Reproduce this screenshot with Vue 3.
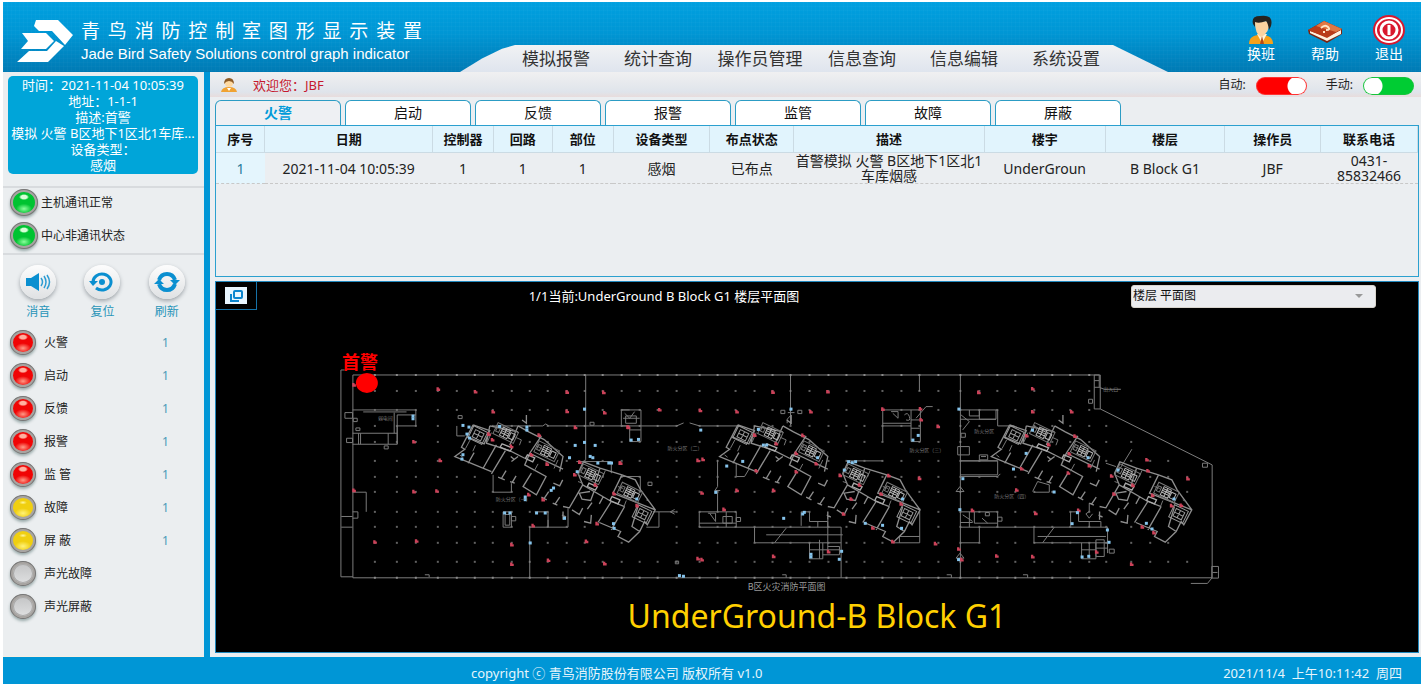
<script setup>
import { ref } from 'vue'

const navItems = ['模拟报警', '统计查询', '操作员管理', '信息查询', '信息编辑', '系统设置']
const tabs = ['火警', '启动', '反馈', '报警', '监管', '故障', '屏蔽']
const activeTab = ref(0)
const autoMode = ref(true)
const manualMode = ref(false)
const floorView = ref('楼层 平面图')

const counters = [
  { name: '火警', color: 'red', count: 1 },
  { name: '启动', color: 'red', count: 1 },
  { name: '反馈', color: 'red', count: 1 },
  { name: '报警', color: 'red', count: 1 },
  { name: '监 管', color: 'red', count: 1 },
  { name: '故障', color: 'yellow', count: 1 },
  { name: '屏 蔽', color: 'yellow', count: 1 },
  { name: '声光故障', color: 'grey' },
  { name: '声光屏蔽', color: 'grey' }
]

const columns = [
  ['序号', 49], ['日期', 168], ['控制器', 61], ['回路', 59], ['部位', 61], ['设备类型', 97],
  ['布点状态', 84], ['描述', 191], ['楼宇', 121], ['楼层', 120], ['操作员', 96], ['联系电话', 97]
]
const records = [
  ['1', '2021-11-04 10:05:39', '1', '1', '1', '感烟', '已布点', '首警模拟 火警 B区地下1区北1车库烟感', 'UnderGroun', 'B Block G1', 'JBF', '0431-85832466']
]

/* column grid of the garage, in plan units */
const gridX = [375, 397, 416, 438, 457, 475, 493, 512, 530, 548, 567, 585, 603, 622, 640, 658, 677, 700, 718, 736, 755, 773, 791, 810, 829, 847, 865, 883, 902, 920, 939, 961, 980, 998, 1016, 1035, 1053, 1071, 1090, 1107, 1132, 1151, 1169, 1188]
const gridY = [391, 410, 426, 442, 461, 477, 492, 512, 527, 543, 562]
const towers = [{ x: 345 }, { x: 610 }, { x: 882 }]
const towerLeft = [457, 722, 994]
const inTower = (x, y) =>
  towerLeft.some((l) => x > l - 2 && x < l + 204 && y > 416 + 0.45 * (x - l) && y < 464 + 0.45 * (x - l))
const outside = (x, y) => x > 1094 && y < 416 + (x - 1094) * 0.48
const dots = gridX.flatMap((x) => gridY.map((y) => [x, y])).filter(([x, y]) => !inTower(x, y) && !outside(x, y))
const wallTicks = gridX.filter((x) => x < 1100)

/* detectors: each sheet lists positions at three times plan scale */
const sheets = [
  {
    x: 330,
    red: '72,135 325,148 437,156 490,216 712,157 712,215 822,158 825,219 737,263 252,306 331,362 72,452 252,456 321,454 135,607 260,604 546,615 546,674 656,662 770,605 825,672 750,367 872,370 477,283 488,300 628,286 545,320 605,345 652,373 735,405 797,436 853,462 597,465 640,480 802,552 610,558 895,262',
    blue: '250,229 250,237 765,208 400,257 418,262 412,283 420,295 510,260 592,262 592,271 765,308 797,317 737,317 720,354 782,350 790,354 805,370 838,370 743,396 400,345 397,358 665,452 672,445 587,472 587,480 525,520 541,520 621,520 647,520 705,536 602,610 852,552 854,566'
  },
  {
    x: 610,
    red: '490,157 655,156 820,208 150,210 272,212 382,216 604,216 933,207 56,263 435,286 580,287 500,312 560,341 620,372 440,393 560,396 32,370 265,362 280,359 692,407 838,408 277,460 382,452 492,452 930,416 815,463 725,478 875,493 82,498 343,509 702,523 790,565 850,606 657,636 265,657 277,660 492,650 935,240 750,436',
    blue: '545,208 274,271 65,301 87,299 447,269 462,316 472,316 400,365 352,379 625,354 705,391 718,366 729,369 739,366 6,370 319,458 880,478 82,478 523,536 580,523 585,518 768,551 820,557 877,566 605,644 605,652 697,635 690,659 911,301 927,287 222,710 210,708'
  },
  {
    x: 920,
    red: '178,158 340,147 340,216 457,216 56,260 322,288 467,289 388,315 450,342 510,378 307,387 447,400 683,360 686,393 806,417 577,409 641,437 292,451 584,463 700,467 786,497 757,498 159,512 349,521 478,512 669,562 704,579 48,612 118,628 232,649 340,651 532,637 637,674 127,660',
    blue: '119,208 340,271 321,341 283,388 507,354 405,457 597,391 765,478 131,417 122,510 475,519 459,552 682,551 699,568 565,571 570,608 509,650 489,652 118,660'
  }
]
const marks = (list) => list.split(' ').map((p) => p.split(',').map(Number))

const stairs = [[482, 281], [605, 336], [738, 405], [855, 460]]
const rooms = [[400, 286], [893, 523]]
</script>

<template>
  <div class="page">
    <header class="header">
      <svg class="logo" viewBox="0 0 56 42" aria-hidden="true">
        <path fill="#fff" d="M19 0H41L56 15L48 25L35 11H22L17 6z" />
        <path fill="#fff" d="M5 13H29L37 21L29 29H4L11 21z" />
        <path fill="#fff" d="M12 31H30L39 21L47 26L31 42H0z" />
      </svg>
      <div class="brand">
        <h1>青鸟消防控制室图形显示装置</h1>
        <p>Jade Bird Safety Solutions control graph indicator</p>
      </div>
      <nav class="nav">
        <a v-for="item in navItems" :key="item" href="#">{{ item }}</a>
      </nav>
      <div class="actions">
        <button type="button">
          <svg viewBox="0 0 30 30" aria-hidden="true">
            <path d="M3 29C3 22 8 20 14 20C22 20 27 22 27 29z" fill="#f6a11a" />
            <path d="M11 19L16 28L21 19z" fill="#fff4dc" /><path d="M16 21L14 29H18z" fill="#b54a17" />
            <path d="M9 7Q9 19 15 22Q24 18 23 6z" fill="#fbd3a0" />
            <path d="M7 9Q5 1 14 1Q28 -1 25 11L23 15Q22 8 20 6Q13 9 9 7L9 12z" fill="#26231f" />
          </svg>换班
        </button>
        <button type="button">
          <svg viewBox="0 0 36 30" aria-hidden="true">
            <path d="M1 15L17 6L35 14V19L20 28L2 19z" fill="#7b2410" />
            <path d="M20 22L34 15V19L20 26L3 18V16z" fill="#fff1df" />
            <path d="M1 15L17 6L35 14L20 23z" fill="#b93c1a" /><path d="M9 11L17 6L35 14L29 17z" fill="#df7844" />
            <path d="M14 13Q18 9 21 12T19 15M16 17H18" fill="none" stroke="#ffe5c7" stroke-width="2" />
          </svg>帮助
        </button>
        <button type="button">
          <svg viewBox="0 0 32 30" aria-hidden="true">
            <ellipse cx="16" cy="15" rx="16" ry="15" fill="#d9182e" /><ellipse cx="16" cy="15" rx="13" ry="12" fill="none" stroke="#fff" stroke-width="2" />
            <ellipse cx="16" cy="15" rx="8" ry="8" fill="none" stroke="#fff" stroke-width="3" />
            <path d="M16 10V20" stroke="#fff" stroke-width="3" />
          </svg>退出
        </button>
      </div>
    </header>

    <div class="body">
      <aside class="sidebar">
        <section class="alert">
          <div>时间：2021-11-04 10:05:39</div>
          <div>地址：1-1-1</div>
          <div>描述:首警</div>
          <div>模拟 火警 B区地下1区北1车库...</div>
          <div>设备类型：</div>
          <div>感烟</div>
        </section>
        <section class="links">
          <div><i class="lamp green"></i>主机通讯正常</div>
          <div><i class="lamp green"></i>中心非通讯状态</div>
        </section>
        <section class="tools">
          <button type="button">
            <span><svg viewBox="0 0 26 20" aria-hidden="true"><path d="M1 6H6L14 1V19L6 14H1z" fill="#0a8fd0" /><path d="M16 6Q19 10 16 14M19 4Q23 10 19 16M22 3Q27 10 22 17" fill="none" stroke="#2d9cd3" stroke-width="1.5" /></svg></span>消音
          </button>
          <button type="button">
            <span><svg viewBox="0 0 26 20" aria-hidden="true"><path d="M4 10A9 8 0 1 1 7 16" fill="none" stroke="#0a8fd0" stroke-width="3" /><path d="M0 9L4 14L9 9z" fill="#0a8fd0" /><circle cx="13" cy="10" r="3" fill="#0a8fd0" /></svg></span>复位
          </button>
          <button type="button">
            <span><svg viewBox="0 0 26 20" aria-hidden="true"><path d="M5 8Q7 2 13 2Q19 2 21 8M21 12Q19 18 13 18Q7 18 5 12" fill="none" stroke="#0a8fd0" stroke-width="4" /><path d="M16 8H26L21 13zM0 12H10L5 7z" fill="#0a8fd0" /></svg></span>刷新
          </button>
        </section>
        <ul class="counters">
          <li v-for="c in counters" :key="c.name"><i class="lamp" :class="c.color"></i><span>{{ c.name }}</span><b v-if="c.count">{{ c.count }}</b></li>
        </ul>
      </aside>

      <main class="main">
        <div class="welcome">
          <svg viewBox="0 0 16 14" aria-hidden="true"><path d="M0 14Q1 9 8 9T16 14z" fill="#f0a232" /><circle cx="8" cy="5" r="4" fill="#ffd9a0" /><path d="M3 6Q3 0 8 0T13 6Q11 3 8 3T3 6z" fill="#8d5a24" /><path d="M6 10L8 13L10 10z" fill="#fff" /></svg>
          <span class="user">欢迎您：JBF</span>
          <label>自动:<input v-model="autoMode" type="checkbox" class="switch" /></label>
          <label>手动:<input v-model="manualMode" type="checkbox" class="switch" /></label>
        </div>

        <div class="tabs" role="tablist">
          <button v-for="(t, i) in tabs" :key="t" type="button" role="tab" :aria-selected="activeTab === i" :class="{ active: activeTab === i }" @click="activeTab = i">{{ t }}</button>
        </div>

        <div class="records">
          <table>
            <colgroup><col v-for="c in columns" :key="c[0]" :style="{ width: (c[1] / 1204) * 100 + '%' }" /></colgroup>
            <thead><tr><th v-for="c in columns" :key="c[0]">{{ c[0] }}</th></tr></thead>
            <tbody><tr v-for="(r, i) in records" :key="i"><td v-for="(v, k) in r" :key="k">{{ v }}</td></tr></tbody>
          </table>
        </div>

        <section class="map">
          <div class="mapbar">
            <button type="button" class="expand" aria-label="展开">
              <svg viewBox="0 0 22 17" aria-hidden="true"><rect width="22" height="17" fill="#e9f6ff" /><rect x="9" y="4" width="8" height="7" rx="1" fill="none" stroke="#0b86cf" stroke-width="2" /><path d="M6 7V14H14" fill="none" stroke="#0b86cf" stroke-width="2" /></svg>
            </button>
            <span class="where">1/1当前:UnderGround B Block G1 楼层平面图</span>
            <label class="floor">
              <select v-model="floorView" aria-label="楼层"><option>楼层 平面图</option></select>
              <svg viewBox="0 0 8 4" aria-hidden="true"><path d="M0 0H8L4 4z" fill="#999" /></svg>
            </label>
          </div>

          <svg class="plan" viewBox="216 345 1203 252" role="img" aria-label="B区火灾消防平面图">
            <g fill="none" stroke="#7c7c7c">
              <path d="M353 375H1101V409L1213 465V578H353zM341 370H345M341 370V577H353M586 375V460M530 527V578M791 375V425M961 375V578M1095 375V409H1101M920 375V391" />
              <path d="M494 426H543L546 424L549 426H677L684 423M690 423L700 426H740M457 426V436H465" />
            </g>
            <g fill="#8a8a8a">
              <rect v-for="(d, i) in dots" :key="i" :x="d[0] - 1" :y="d[1] - 1" width="2" height="2" opacity="0.7" />
              <path v-for="x in wallTicks" :key="x" :d="`M${x - 1} 374h2v2h-2zM${x - 1} 577h2v2h-2z`" />
            </g>

            <g transform="translate(330 340) scale(0.3333)" fill="none" stroke="#7a7a7a" stroke-width="3">
              <path d="M68 210H258V258H202V313H68M68 280H202M193 218V280M202 225V313M202 225H258M100 216H230M92 280V313M86 280V313M175 280V313" />
              <path d="M45 218H68V235H45zM70 235H82V245H70zM50 295H68V308H50zM78 264H90V272H78zM163 318H175V327H163zM385 227H397V236H385zM781 247H793V256H781z" />
              <path d="M68 457H109V516M34 530H68M34 562H68M68 516H84V535H68M490 405V457H545V430M520 516H545V562H520zM526 524H540V556H526zM545 530H558V543H545zM600 562H715V505M615 516H655V562M655 540V562M285 705H298V712" />
              <path d="M740 365H845V400M876 210H900" />
            </g>

            <g transform="translate(610 340) scale(0.3333)" fill="none" stroke="#7a7a7a" stroke-width="3">
              <path d="M35 210H94V305H60V258H35zM45 220L60 235L75 215M40 235H90M60 270H94M48 228H80V250H48zM35 410H92V457M115 427H127V437H115zM130 516H198M182 516L195 509M182 516L195 523M148 516V562H110" />
              <path d="M324 360V440L316 452L324 460V516M316 452L332 452M380 370V410H405L420 385M269 516H380V562M269 516V562H695V714M269 550H380M300 520L318 545V520H295M340 530H368V550H340zM350 516V562M380 533H393V545H380zM435 562V609H695M530 565L495 609M470 585H700" />
              <path d="M575 516V558M600 516V545H655V562M575 516H600M625 545V562M655 540V630M600 609V657H640V609M630 600V657M600 630H690M655 620H690V645H640M820 210V305M820 210H931M820 250H905M820 258H905M850 220L866 235V215H845M905 210V305H933V210M885 225Q895 215 900 230T890 240M905 240H931M905 265H931M514 211H526V221H514zM565 211H577V221H565zM533 250V238L545 225M518 705H530V714M197 664H207V672H197z" />
              <path d="M710 363H820M931 505V609H850M870 609V590H931M535 218H555M920 235L950 200H970" />
            </g>

            <g transform="translate(920 340) scale(0.3333)" fill="none" stroke="#7a7a7a" stroke-width="3">
              <path d="M122 210H235V258H285M150 210V228H180V210M180 210V238H230V210M122 238H230M125 225L150 245L130 270M125 280H138V292H125zM115 320H150V345H115zM122 363H235V405H122M122 410H235L243 402M122 363H235M180 345H205V360H180zM185 350H200" />
              <path d="M110 455L122 440L134 455H110M122 516H235V562M122 562H565V640M122 609H180V562M150 516V562M130 525L160 545M122 548H160M165 516V550H235M198 518H210V528H198zM188 535L205 550M235 532H248V544H235zM344 562V609H565M405 562L370 609M355 590H560" />
              <path d="M454 516V558M478 516V545H545V562M454 516H478M510 545V562M510 490V515L500 522L510 535L520 522M487 609V657H530V609M510 609V657M530 600H555V650H530zM530 625H565M487 630H530M570 628H585V640H570zM344 457H390V435L355 425L340 455M525 105H540V142H525M525 122H540M540 142L555 148H605M508 178H520V190H508zM850 370H865V382H850zM878 680H898V715H878zM880 698H895M878 715L865 731H815M82 705H96V714M311 705H325V714M110 655L122 640L134 655zM600 390L638 328M560 370L590 380" />
            </g>

            <g v-for="t in towers" :key="t.x" :transform="`translate(${t.x} 340) scale(0.3333)`" fill="none" stroke="#8d8d8d" stroke-width="4">
              <path d="M385 255L435 272L418 312L366 290M385 255L350 322L360 328L330 350L440 395M435 258L520 276M435 258L425 310L495 332M388 338L370 370M455 315L415 385M482 332L440 402M520 258L495 315M520 258L552 276L600 300M590 288L555 340L540 375L604 410L575 465L535 440L560 400M490 330L540 355M555 340L655 388M600 300L655 350L645 395" />
              <path d="M532 240L545 250V225M500 365L520 350M508 358L498 350M460 412L480 420M470 416L484 392M496 425L510 430M503 427L514 408M590 472L606 480M598 476L612 455M624 490L638 496M631 493L645 472M626 430L645 438L654 420" />
              <path d="M655 515V540M652 525L664 532M655 500L674 504L714 435L700 400L716 366L766 385L832 405L872 420L888 450L932 510L908 555L900 545L885 575L852 607L820 590L828 575L764 548M766 385L748 440M714 435L800 485L840 500M736 455L704 460L712 478L738 482L748 455M832 405L805 460L932 510M800 485L760 548M840 500L800 570M742 488L728 508M776 470L764 492M682 510L704 524L714 505M718 545L738 550L740 525M860 480L905 500M880 500L862 560L885 575" />
              <path d="M440 278L428 306M512 292L530 300L524 316M580 372L568 394M575 318L592 326M640 360L628 386M700 425L714 430M782 392L774 412M820 440L836 446M845 482L838 500M905 480L916 486M376 300L362 326M392 316L384 334M345 345L354 352" stroke="#777" stroke-width="3" />
              <g v-for="(c, i) in stairs" :key="i" :transform="`translate(${c[0]} ${c[1]}) rotate(26)`" stroke-width="3">
                <rect x="-34" y="-20" width="68" height="36" stroke="#777" />
                <path d="M-14 -15V12H10V-15zM-14 -9H10M-14 -3H10M-14 3H10M-2 -15V12M14 -10H28V8H14z" stroke="#b5b5b5" />
                <path d="M-30 -10H-20V6H-30z" stroke="#777" />
              </g>
              <g v-for="(c, i) in rooms" :key="'r' + i" :transform="`translate(${c[0]} ${c[1]}) rotate(26)`" stroke-width="3">
                <path d="M-24 -20H22V20H-24zM-14 -12H14V12H-14zM-14 0H14M0 -12V12" stroke="#999" />
              </g>
              <path d="M472 312L502 324L496 334L466 322zM548 345L570 354L564 366L542 356zM733 430L758 441L752 451L728 440zM802 470L826 480L820 492L796 482z" stroke="#aaa" />
            </g>

            <g v-for="s in sheets" :key="s.x" :transform="`translate(${s.x} 340) scale(0.3333)`">
              <path v-for="(m, i) in marks(s.red)" :key="i" :d="`M${m[0] - 5} ${m[1] - 6}h7v4h4v7h-11z`" fill="#cc4259" />
              <rect v-for="(m, i) in marks(s.blue)" :key="i" :x="m[0] - 5" :y="m[1] - 5" width="9" height="9" fill="#86c4ec" />
            </g>

            <g class="tiny">
              <text x="496" y="501">防火分区（一）</text><text x="668" y="450">防火分区（二）</text><text x="995" y="498">防火分区（四）</text><text x="910" y="452">防火分区（三）</text>
              <text x="975" y="433">防火分区</text><text x="378" y="420">弱电间</text><text x="1104" y="391">出入口</text>
            </g>
            <text class="sheetname" x="787" y="590">B区火灾消防平面图</text>
            <text class="first" x="360" y="369">首警</text>
            <ellipse cx="367" cy="383" rx="11" ry="10" fill="#f00" />
          </svg>

          <h2>UnderGround-B Block G1</h2>
        </section>
      </main>
    </div>

    <footer class="footer">
      <span>copyright ⓒ 青鸟消防股份有限公司 版权所有 v1.0</span>
      <time>2021/11/4 &nbsp;上午10:11:42 &nbsp;周四</time>
    </footer>
  </div>
</template>

<style>
body { background: #fff; }
</style>

<style scoped>
.page { box-sizing: border-box; min-height: 100vh; padding: 2px 1px 0 3px; display: flex; flex-direction: column; font: 12px/16px "Noto Sans", "Noto Sans CJK SC", sans-serif; color: #222; }
button { border: 0; padding: 0; background: none; font: inherit; color: inherit; cursor: pointer; }
a { color: inherit; text-decoration: none; }
svg { display: block; }

.header { height: 70px; display: flex; align-items: flex-start; background: repeating-linear-gradient(90deg, rgba(255, 255, 255, .02) 0 1px, transparent 1px 4px), repeating-linear-gradient(rgba(255, 255, 255, .02) 0 1px, transparent 1px 4px), linear-gradient(#00a0e0, #0096d4 45%, #007ab4); }
.logo { width: 56px; height: 42px; margin: 18px 8px 0 14px; flex: none; }
.brand { width: 341px; margin-top: 16px; color: #fff; flex: none; }
.brand h1 { margin: 0 0 2px; font-size: 19px; line-height: 26px; font-weight: 400; text-align: justify; text-align-last: justify; }
.brand p { margin: 0; font: 15px/16px "Liberation Sans", sans-serif; white-space: nowrap; }
.nav { align-self: flex-end; margin-left: 38px; padding: 0 51px 0 45px; display: flex; height: 27px; flex: none; background: linear-gradient(#f1f2f4, #dfe5ee); clip-path: polygon(0 100%, 22px 50%, 42px 14%, 55px 0, calc(100% - 55px) 0, 100% 100%); }
.nav a { width: 102px; text-align: center; font-size: 17px; line-height: 27px; color: #333; }
.actions { margin: 13px 0 0 auto; display: flex; flex: none; }
.actions button { width: 64px; display: flex; flex-direction: column; align-items: center; color: #fff; font-size: 14px; line-height: 17px; }
.actions svg { height: 30px; }

.body { flex: 1; display: grid; grid-template-columns: 201px minmax(0, 1fr); }
.sidebar { background: #ebeef0; border-bottom: 1px solid #f7efe2; }
.alert { margin: 4px 6px 12px 5px; padding: 1px 0 0; height: 97px; border-radius: 5px; background: #00a5d9; color: #fff; text-align: center; font-size: 13px; white-space: nowrap; overflow: hidden; }
.links { border: 2px solid #d8dbde; border-width: 2px 0; height: 65px; }
.links div { display: flex; align-items: center; height: 33px; padding: 0 0 4px 7px; box-sizing: border-box; }
.links .lamp { width: 28px; height: 27px; margin-right: 3px; }
.lamp { box-sizing: border-box; flex: none; width: 26px; height: 25px; border-radius: 50%; border: 3px solid #a8a5a2; box-shadow: 0 2px 3px #9aa; outline: 1px solid #777; outline-offset: -1px; }
.lamp.green { background: radial-gradient(ellipse 5px 3px at 50% 24%, #d8ffd8 0 60%, transparent), radial-gradient(ellipse 8px 5px at 50% 80%, #8dff9d, transparent), #00c331; }
.lamp.red { background: radial-gradient(ellipse 5px 3px at 50% 22%, #ffb0a0 0 60%, transparent), radial-gradient(ellipse 8px 5px at 50% 80%, #ff9a86, transparent), #f00505; }
.lamp.yellow { background: radial-gradient(ellipse 4px 2px at 50% 24%, #fff7a0, transparent), radial-gradient(ellipse 8px 5px at 50% 80%, #fff27a, transparent), #f0cf10; }
.lamp.grey { background: linear-gradient(#c4c5c6, #dedfe0); box-shadow: 0 2px 3px #9aa, inset 0 0 0 1px #aaa; }
.tools { box-sizing: border-box; display: flex; padding: 10px 5px 0 3px; height: 71px; }
.tools button { flex: 1; display: flex; flex-direction: column; align-items: center; color: #2794b8; }
.tools span { width: 36px; height: 34px; margin-bottom: 5px; display: grid; place-items: center; border-radius: 50%; background: linear-gradient(#fdfdfd, #dfe1e3); box-shadow: 0 2px 4px #9da3a8; }
.tools svg { width: 26px; height: 20px; }
.counters { list-style: none; margin: 0; padding: 0 0 0 7px; }
.counters li { height: 33px; display: flex; align-items: center; }
.counters li span { width: 118px; padding-left: 8px; }
.counters b { font-weight: 400; color: #4a9ab8; }

.main { display: flex; flex-direction: column; padding: 0 2px 4px 5px; background: #ebeef1; border-left: 6px solid #0096d6; }
.welcome { height: 25px; margin: 0 -2px 0 -5px; padding: 0 7px 0 11px; display: flex; align-items: center; background: linear-gradient(#f0f0f1, #dfe4eb 80%, #e8dcdc); }
.welcome > svg { width: 16px; height: 14px; margin-right: 16px; }
.welcome .user { color: #c6182e; font-size: 13px; margin-right: auto; }
.welcome label { display: flex; align-items: center; gap: 10px; margin-left: 19px; }
.switch { appearance: none; width: 51px; height: 18px; margin: 2px 0 0; border-radius: 9px; background: radial-gradient(circle at 10px 9px, #fff 0 9px, transparent 10px), #00cc33; box-shadow: inset 0 0 0 1px #18c43c; }
.switch:checked { background: radial-gradient(circle at 41px 9px, #fff 0 9px, transparent 10px), #f00; box-shadow: inset 0 0 0 1px #f33; }
.tabs { display: flex; gap: 4px; margin-top: 3px; }
.tabs button { box-sizing: border-box; width: 126px; height: 25px; border: 1px solid #2c9cc4; border-bottom: 0; border-radius: 6px 6px 0 0; background: #fff; font-size: 14px; line-height: 24px; color: #111; }
.tabs .active { background: #eef0f3; color: #009bd9; font-weight: 600; }
.records { box-sizing: border-box; height: 152px; border: 1px solid #2ba0cf; }
table { width: 100%; border-collapse: collapse; table-layout: fixed; text-align: center; line-height: 15px; }
th { height: 26px; padding: 0; background: #e1f4fd; border: 1px solid #cbdbe4; border-top: 0; border-left: 0; color: #111; font-size: 13px; }
td { height: 30px; padding: 0 1px; border-bottom: 1px dashed #c8c8c8; font-size: 14px; }
td:first-child { background: #e4f5fd; color: #2a7c9b; }

.map { flex: 1; margin-top: 4px; border: 1px solid #2188bd; background: #000; color: #fff; }
.mapbar { display: flex; height: 28px; align-items: center; }
.expand { box-sizing: border-box; align-self: stretch; width: 41px; display: grid; place-items: center; border: 1px solid #1672a8; border-width: 0 1px 1px 0; }
.expand svg { width: 22px; height: 17px; }
.where { flex: 1; text-align: center; font-size: 13px; padding-right: 60px; }
.floor { position: relative; width: 245px; margin-right: 42px; }
.floor select { box-sizing: border-box; width: 100%; height: 23px; display: block; appearance: none; border: 1px solid #d8d4cd; border-radius: 3px; padding: 0 1px; background: #ebecef; font: inherit; color: #111; }
.floor svg { position: absolute; right: 13px; top: 9px; width: 8px; height: 4px; pointer-events: none; }
.plan { width: 100%; margin-top: 35px; }
.plan .tiny { font: 5px "Noto Sans CJK SC", sans-serif; fill: #777; }
.plan .sheetname { font: 9px "Noto Sans CJK SC", serif; fill: #9a9a9a; text-anchor: middle; }
.plan .first { font: 700 18px "Noto Sans CJK SC", sans-serif; fill: #f00; text-anchor: middle; }
.map h2 { margin: 0; text-align: center; font: 32px/38px "Noto Sans", sans-serif; color: #ffd000; }

.footer { height: 27px; display: flex; align-items: center; background: #0096d6; color: #e6f5fc; font-size: 13px; padding: 4px 19px 0 468px; box-sizing: border-box; }
.footer time { margin-left: auto; white-space: nowrap; }
</style>
